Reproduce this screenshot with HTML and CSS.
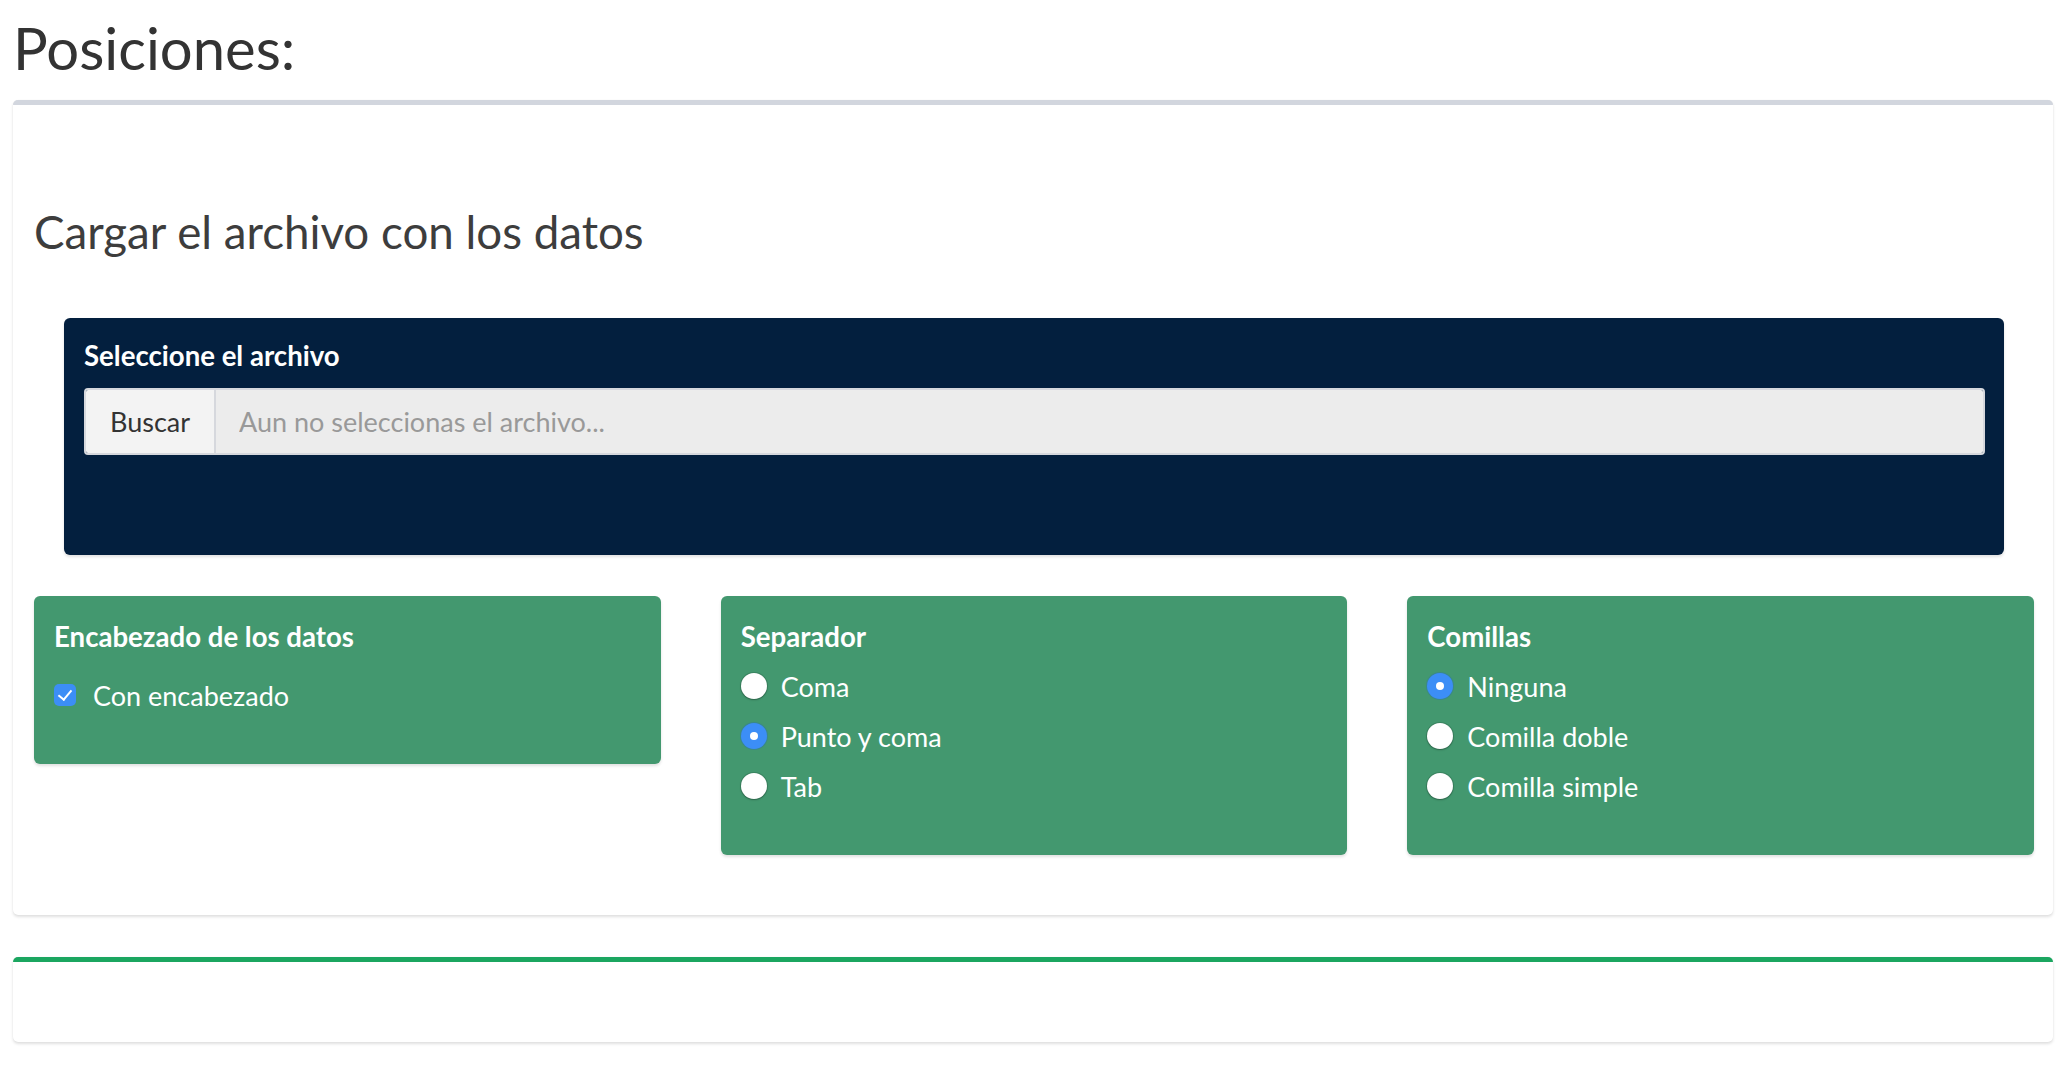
FILE: index.html
```html
<!DOCTYPE html>
<html lang="es">
<head>
<meta charset="utf-8">
<title>Posiciones</title>
<link rel="stylesheet" href="styles.css">
</head>
<body>
<div class="page">
  <h1 class="page-title">Posiciones:</h1>

  <section class="box box-default">
    <div class="box-body">
      <h3 class="section-title">Cargar el archivo con los datos</h3>

      <div class="file-wrap">
        <div class="file-panel">
          <label class="panel-label">Seleccione el archivo</label>
          <div class="input-group">
            <span class="btn-browse">Buscar</span>
            <input class="file-name" type="text" placeholder="Aun no seleccionas el archivo..." readonly>
          </div>
        </div>
      </div>

      <div class="options">
        <div class="opt-panel">
          <div class="opt-title">Encabezado de los datos</div>
          <label class="check-row">
            <input type="checkbox" class="check" checked>
            <span>Con encabezado</span>
          </label>
        </div>

        <div class="opt-panel">
          <div class="opt-title">Separador</div>
          <div class="radio-list">
            <label class="radio-row"><input type="radio" name="sep" class="radio"><span>Coma</span></label>
            <label class="radio-row"><input type="radio" name="sep" class="radio" checked><span>Punto y coma</span></label>
            <label class="radio-row"><input type="radio" name="sep" class="radio"><span>Tab</span></label>
          </div>
        </div>

        <div class="opt-panel">
          <div class="opt-title">Comillas</div>
          <div class="radio-list">
            <label class="radio-row"><input type="radio" name="quote" class="radio" checked><span>Ninguna</span></label>
            <label class="radio-row"><input type="radio" name="quote" class="radio"><span>Comilla doble</span></label>
            <label class="radio-row"><input type="radio" name="quote" class="radio"><span>Comilla simple</span></label>
          </div>
        </div>
      </div>
    </div>
  </section>

  <section class="box box-success">
    <div class="box-empty"></div>
  </section>
</div>
</body>
</html>
```

FILE: styles.css
```css
html, body {
  margin: 0;
  padding: 0;
  background: #ffffff;
}

body {
  font-family: Lato, "Noto Sans", sans-serif;
  color: #333333;
}

.page {
  padding: 15px 11px 20px 13px;
}

.page-title {
  margin: 0 0 20px 0;
  font-size: 58px;
  line-height: 65px;
  font-weight: 400;
  color: #333333;
}

.box {
  background: #ffffff;
  border-radius: 5px;
  border-top: 5px solid #d2d6de;
  box-shadow: 0 2px 3px rgba(0, 0, 0, 0.12), 0 0 1px rgba(0, 0, 0, 0.08);
}

.box-success {
  border-top-color: #1ba660;
  margin-top: 42px;
}

.box-body {
  padding: 100px 19px 60px 21px;
}

.box-empty {
  height: 80px;
}

.section-title {
  margin: 0;
  font-size: 45.7px;
  line-height: 54px;
  font-weight: 400;
  color: #3d3d3d;
}

.file-wrap {
  margin: 59px 30px 0 30px;
}

.file-panel {
  background: #031f3e;
  border-radius: 6px;
  padding: 18px 19px 100px 20px;
  box-shadow: 0 2px 3px rgba(0, 0, 0, 0.12);
}

.panel-label {
  display: block;
  color: #ffffff;
  font-weight: 700;
  font-size: 27.6px;
  line-height: 40px;
  margin-bottom: 12px;
}

.input-group {
  display: flex;
  height: 67px;
  box-sizing: border-box;
  border: 2px solid #d6d8dd;
  border-radius: 4px;
  overflow: hidden;
}

.btn-browse {
  display: flex;
  align-items: center;
  padding: 0 24px;
  width: 130px;
  box-sizing: border-box;
  background: #f3f3f3;
  border-right: 2px solid #d6d8dd;
  color: #333333;
  font-size: 27px;
}

.file-name {
  flex: 1;
  border: 0;
  margin: 0;
  padding: 0 20px 0 23px;
  background: #ececec;
  font-family: Lato, "Noto Sans", sans-serif;
  font-size: 27px;
  color: #333333;
  outline: none;
}

.file-name::placeholder {
  color: #999999;
}

.options {
  margin-top: 41px;
  display: grid;
  grid-template-columns: repeat(3, 1fr);
  column-gap: 60px;
  align-items: start;
}

.opt-panel {
  background: #43986f;
  border-radius: 6px;
  padding: 20px 20px 44px 20px;
  color: #ffffff;
  box-shadow: 0 2px 3px rgba(0, 0, 0, 0.12);
}

.opt-title {
  font-weight: 700;
  font-size: 27.6px;
  line-height: 42px;
}

.check-row {
  display: flex;
  align-items: center;
  height: 50px;
  margin-top: 12px;
  font-size: 27px;
  gap: 17px;
}

.radio-list {
  margin-top: 3px;
}

.radio-row {
  display: flex;
  align-items: center;
  height: 50px;
  font-size: 27px;
  gap: 14px;
}

.check {
  appearance: none;
  -webkit-appearance: none;
  margin: 0;
  width: 22px;
  height: 22px;
  border-radius: 5px;
  background: #3c8ef6;
  position: relative;
  flex: none;
}

.check:checked::after {
  content: "";
  position: absolute;
  left: 7px;
  top: 3px;
  width: 6px;
  height: 11px;
  border-right: 2.5px solid #ffffff;
  border-bottom: 2.5px solid #ffffff;
  transform: rotate(40deg);
}

.radio {
  appearance: none;
  -webkit-appearance: none;
  margin: 0;
  width: 26px;
  height: 26px;
  border-radius: 50%;
  background: #ffffff;
  box-shadow: 0 0 0 1px rgba(0, 0, 0, 0.12), 0 1px 2px rgba(0, 0, 0, 0.25);
  position: relative;
  flex: none;
}

.radio:checked {
  background: #3c8ef6;
  box-shadow: 0 0 0 1px rgba(40, 100, 200, 0.3);
}

.radio:checked::after {
  content: "";
  position: absolute;
  left: 9px;
  top: 9px;
  width: 8px;
  height: 8px;
  border-radius: 50%;
  background: #ffffff;
}
```
